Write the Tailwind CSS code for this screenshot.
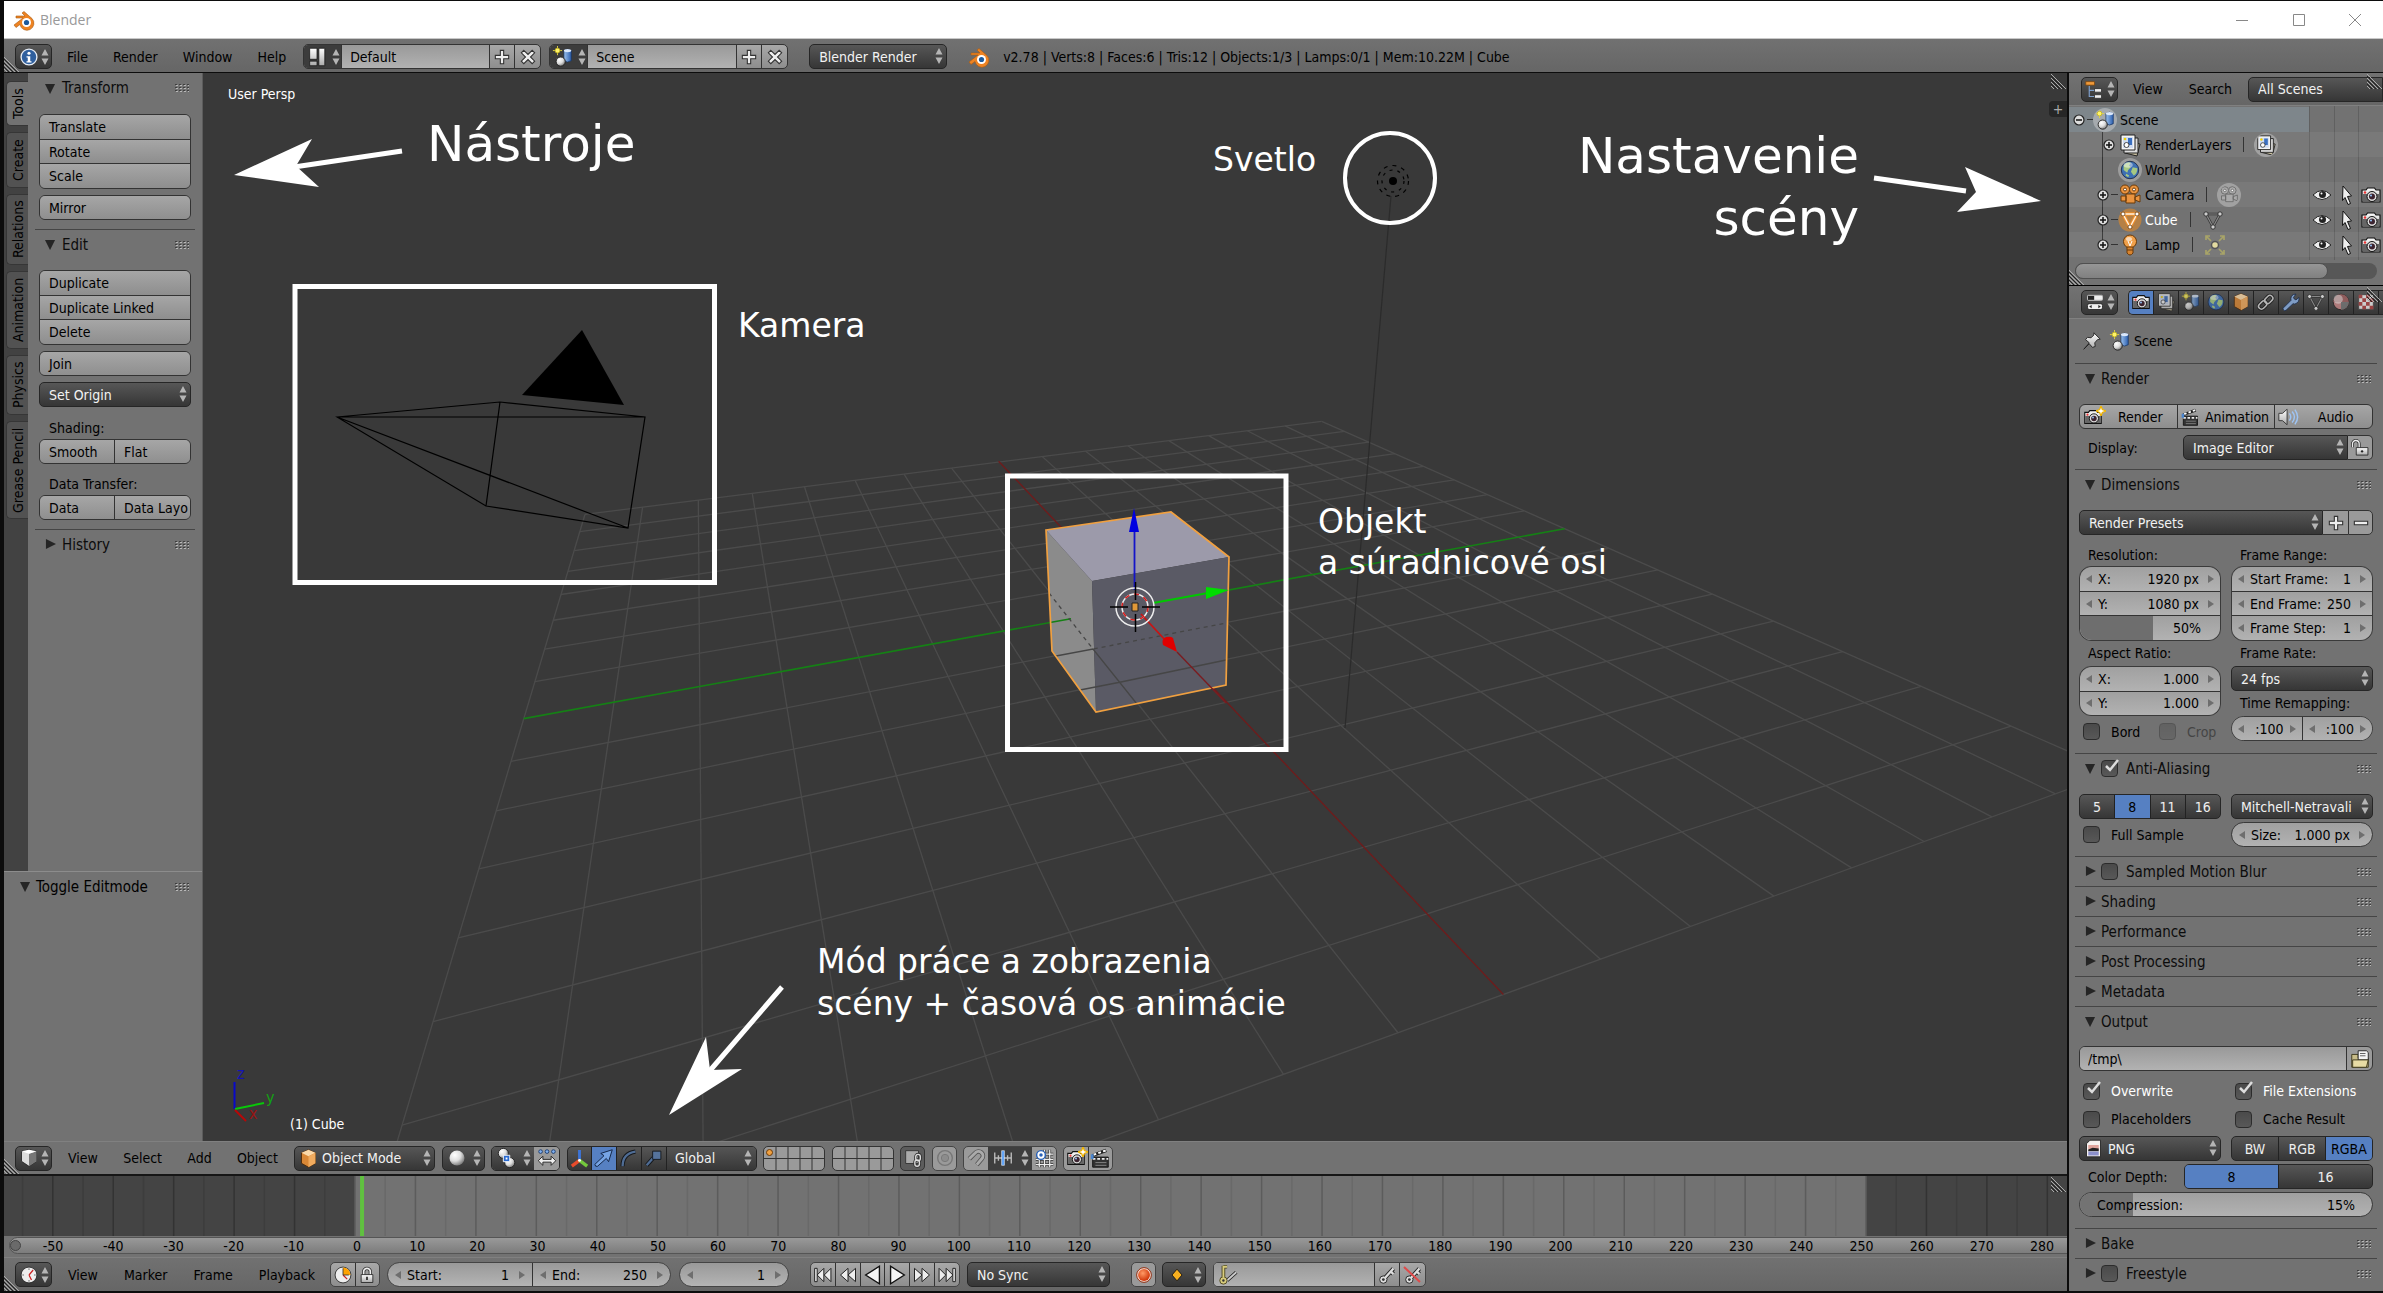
<!DOCTYPE html>
<html lang="en">
<head>
    <meta charset="UTF-8">
    <meta name="viewport" content="width=device-width, initial-scale=1.0">
    <title>Blender</title>
    <script src="https://cdn.jsdelivr.net/npm/@tailwindcss/browser@4"></script>
</head>
<body class="h-screen overflow-hidden bg-[#0c0c0c] flex flex-col pl-1 pt-px text-[14px] leading-[18px] text-black font-['DejaVu_Sans_Condensed','DejaVu_Sans',sans-serif] [&_svg]:shrink-0 [&_select]:appearance-none [&_select]:w-full [&_select]:h-[25px] [&_select]:rounded-[5px] [&_select]:border [&_select]:border-[#262626] [&_select]:bg-linear-to-b [&_select]:from-[#575757] [&_select]:to-[#363636] [&_select]:text-[#f2f2f2] [&_input]:min-w-0">

    <!-- Icons -->
    <svg class="absolute size-0" aria-hidden="true">
        <defs>
            <linearGradient id="gw" x1="0" y1="0" x2="0" y2="1"><stop offset="0" stop-color="#fff"/><stop offset="1" stop-color="#aaa"/></linearGradient>
            <linearGradient id="gb" x1="0" y1="0" x2="1" y2="0"><stop offset="0" stop-color="#9cc2ee"/><stop offset="1" stop-color="#2c5fae"/></linearGradient>
            <radialGradient id="gs" cx=".35" cy=".3" r=".8"><stop offset="0" stop-color="#fff"/><stop offset=".5" stop-color="#ddd"/><stop offset="1" stop-color="#666"/></radialGradient>
            <radialGradient id="gr" cx=".4" cy=".35" r=".7"><stop offset="0" stop-color="#ff9a66"/><stop offset="1" stop-color="#cc2c00"/></radialGradient>
        </defs>
        <symbol id="updown" viewBox="0 0 8 18"><path d="M4 1l3.5 6.500h-7zM4 17l3.500-6.500h-7z" fill="#b5b5b5"/></symbol>
        <symbol id="left" viewBox="0 0 6 8"><path d="M6 0v8L0 4z" fill="#6e6e6e"/></symbol>
        <symbol id="right" viewBox="0 0 6 8"><path d="M0 0v8l6-4z" fill="#6e6e6e"/></symbol>
        <symbol id="open" viewBox="0 0 12 12"><path d="M0 1h11L5.500 12z" fill="#252525"/></symbol>
        <symbol id="closed" viewBox="0 0 12 12"><path d="M1 0v11l11-5.500z" fill="#252525"/></symbol>
        <symbol id="grip" viewBox="0 0 14 8"><path d="M0 .5h14M0 3.500h14M0 6.500h14" stroke="#3f3f3f" stroke-dasharray="2 2"/><path d="M1 1.500h14M1 4.500h14M1 7.500h14" stroke="#b8b8b8" stroke-dasharray="2 2"/></symbol>
        <symbol id="corner" viewBox="0 0 16 16"><path d="M0 1l15 15M0 5l11 11M0 9l7 7M0 13l3 3" stroke="#aaa"/><path d="M0 3l13 13M0 7l9 9M0 11l5 5" stroke="#222"/></symbol>
        <symbol id="blender" viewBox="0 0 24 24"><path d="M2 17l9-7H4V8h9l-3-3 2-1.500 8 7a7 7 0 1 1-12 6l-4 3z" fill="#ee8322" stroke="#a85a10" stroke-width=".6"/><circle cx="14.500" cy="14.500" r="4.500" fill="#fff"/><circle cx="14.500" cy="14.500" r="2.600" fill="#1d5a9c"/></symbol>
        <symbol id="info" viewBox="0 0 24 24"><circle cx="12" cy="12" r="9.500" fill="#2f5f9e" stroke="#e8eef6" stroke-width="1.600"/><circle cx="12" cy="7.500" r="1.900" fill="#fff"/><path d="M9 11h4.500v6H15v1.500H9V17h1.500v-4.500H9z" fill="#fff"/></symbol>
        <symbol id="screen" viewBox="0 0 24 24"><path d="M4 2.500h8v12H4zM4 16.500h8v5H4zM14 2.500h6.500v19H14z" fill="url(#gw)" stroke="#111" stroke-width=".8"/></symbol>
        <symbol id="scene" viewBox="0 0 24 24"><path d="M13 5q3.500-3 8 0v11q-4 3-8 0z" fill="url(#gb)" stroke="#16335f" stroke-width=".8"/><ellipse cx="17" cy="5" rx="4" ry="1.700" fill="#dbe8fa"/><circle cx="6" cy="5" r="2.600" fill="#fff46a" stroke="#c8b820"/><path d="M6 0v2M6 8v2M1 5h2M9 5h2" stroke="#e8d840"/><circle cx="9.500" cy="17" r="5" fill="url(#gs)" stroke="#222"/></symbol>
        <symbol id="outliner" viewBox="0 0 24 24"><path d="M6 8v12h6M6 13h6" fill="none" stroke="#7fa0cc" stroke-width="1.300"/><path d="M2 3h10v4H2z" fill="#f09a3a" stroke="#7a430a" stroke-width=".8"/><path d="M12 11h8v4h-8zM12 18h8v4h-8z" fill="#eee" stroke="#222" stroke-width=".8"/></symbol>
        <symbol id="props" viewBox="0 0 24 24"><rect x="3" y="4" width="18" height="6" rx="1" fill="#222" stroke="#ddd"/><path d="M11 4.500h9.500v5H11z" fill="#eee"/><rect x="3" y="14" width="18" height="7" rx="2" fill="#eee" stroke="#222"/><path d="M8 15.500v4l-3-2zM16 15.500v4l3-2z" fill="#222"/></symbol>
        <symbol id="still" viewBox="0 0 24 24"><path d="M3 7h4l1.500-2h7L17 7h4v12H3z" fill="url(#gw)" stroke="#111" stroke-width="1.200"/><path d="M3.500 11h17v7.500h-17z" fill="#666"/><circle cx="13" cy="13.500" r="5" fill="#ddd" stroke="#111"/><circle cx="13" cy="13.500" r="3" fill="#3c2430"/><circle cx="12" cy="12.500" r="1" fill="#9cf"/><circle cx="6" cy="9.500" r="1.200" fill="#e33"/></symbol>
        <symbol id="spark" viewBox="0 0 10 10"><path d="M5 0l1.400 3.600L10 5 6.400 6.400 5 10 3.600 6.400 0 5l3.600-1.400z" fill="#fff" stroke="#f0b400" stroke-width="1.300"/></symbol>
        <symbol id="layers" viewBox="0 0 24 24"><path d="M9 8l13 3-3 12-12-3z" fill="#c9c0a0" stroke="#222"/><path d="M6 5h14v15H6z" fill="#ddd" stroke="#222"/><path d="M3 2h14v15H3z" fill="#f4f4f4" stroke="#222"/><path d="M5 4h10v11H5z" fill="#cfdcf2"/><path d="M10 5h4v7h-4z" fill="#3a6fc0"/><circle cx="8.500" cy="12" r="2.500" fill="#fff" stroke="#222" stroke-width=".8"/><circle cx="7" cy="6" r="1.300" fill="#f0d000"/></symbol>
        <symbol id="world" viewBox="0 0 24 24"><circle cx="12" cy="12" r="9.500" fill="#3e70b4" stroke="#1c2c4c"/><path d="M5 7q4-5 8-3l-2 3 2 2-3 3-1 3-4-3zM15 9l5 1q0 6-4 8l-3-4zM8 16l3 2-1 2-3-2z" fill="#a6c882"/><ellipse cx="10" cy="6.500" rx="5" ry="3" fill="#fff" opacity=".45"/></symbol>
        <symbol id="object" viewBox="0 0 24 24"><path d="M12 2l8 3.500v12L12 22l-8-4.500v-12z" fill="#d98836" stroke="#4a2808"/><path d="M12 2l8 3.500-8 4-8-4z" fill="#fbd9a8"/><path d="M12 9.500l8-4v12L12 22z" fill="#f0ab5e"/></symbol>
        <symbol id="chain" viewBox="0 0 24 24"><g fill="none" stroke="#222" stroke-width="4"><rect x="2" y="12" width="11" height="7" rx="3.500" transform="rotate(-45 8 15)"/><rect x="10" y="5" width="11" height="7" rx="3.500" transform="rotate(-45 16 9)"/></g><g fill="none" stroke="#b4b4b4" stroke-width="1.800"><rect x="2" y="12" width="11" height="7" rx="3.500" transform="rotate(-45 8 15)"/><rect x="10" y="5" width="11" height="7" rx="3.500" transform="rotate(-45 16 9)"/></g></symbol>
        <symbol id="wrench" viewBox="0 0 24 24"><path d="M3 19l9-9q-1-5 3-7l3-.500-3 4 1 2 2 1 3.500-3q1 6-5 8l-2-.500-8.500 8q-2 1-3-.500t-.500-2.500z" fill="#7f9cc4" stroke="#1c2c4c"/></symbol>
        <symbol id="mesh" viewBox="0 0 24 24"><path d="M5 6h14l-7 13z" fill="none" stroke="#333" stroke-width="2.600"/><path d="M5 6h14l-7 13z" fill="none" stroke="#888" stroke-width="1.200"/><circle cx="5" cy="6" r="2.200" fill="#ccc" stroke="#333"/><circle cx="19" cy="6" r="2.200" fill="#ccc" stroke="#333"/><circle cx="12" cy="19" r="2.200" fill="#ccc" stroke="#333"/></symbol>
        <symbol id="cubemesh" viewBox="0 0 24 24"><circle cx="12" cy="12" r="11.500" fill="#b58045"/><path d="M5 6h14l-7 13z" fill="none" stroke="#f0902c" stroke-width="3.600"/><path d="M5 6h14l-7 13z" fill="none" stroke="#fff0dc" stroke-width="1.400"/><g fill="#fff" stroke="#6a3a08" stroke-width=".8"><circle cx="5" cy="6" r="2"/><circle cx="19" cy="6" r="2"/><circle cx="12" cy="19" r="2"/></g></symbol>
        <symbol id="material" viewBox="0 0 24 24"><circle cx="12" cy="12" r="8.500" fill="#c98888" stroke="#222"/><path d="M12 3.500a8.500 8.500 0 0 1 0 17V12H3.500A8.500 8.500 0 0 1 12 3.500z" fill="#a06060"/><circle cx="9" cy="9" r="5" fill="#fff" opacity=".5"/><path d="M12 12h8.500A8.500 8.500 0 0 1 12 20.500z" fill="#777"/></symbol>
        <symbol id="texture" viewBox="0 0 24 24"><path d="M4 4h16v16H4z" fill="#eee" stroke="#444"/><path d="M4 4h4v4H4zM12 4h4v4h-4zM8 8h4v4H8zM16 8h4v4h-4zM4 12h4v4H4zM12 12h4v4h-4zM8 16h4v4H8zM16 16h4v4h-4z" fill="#b04444"/></symbol>
        <symbol id="moviecam" viewBox="0 0 24 24"><circle cx="7" cy="6.500" r="4.500"/><circle cx="16" cy="6.500" r="4.500"/><path d="M8 11h9v9H8zM17 14l5-2v7l-5-2zM3 13h5v5H3z"/><circle cx="7" cy="6.500" r="1.500" fill="#fff"/><circle cx="16" cy="6.500" r="1.500" fill="#fff"/></symbol>
        <symbol id="lamp" viewBox="0 0 24 24"><circle cx="12" cy="8.500" r="6.500" fill="#f0a04a" stroke="#6a3a08"/><path d="M9 14h6v6q-3 4-6 0z" fill="#d88430" stroke="#6a3a08"/><path d="M10 8l2 5 2-5" fill="none" stroke="#fff"/><path d="M9 17h6" stroke="#6a3a08"/><ellipse cx="11" cy="6" rx="3" ry="2" fill="#fff" opacity=".6"/></symbol>
        <symbol id="lampdata" viewBox="0 0 24 24"><circle cx="12" cy="12" r="3.500" fill="#e4dca0" stroke="#555" stroke-width="1.500"/><path d="M3 7V3h4M3 3l5 5M21 7V3h-4M21 3l-5 5M3 17v4h4M3 21l5-5M21 17v4h-4M21 21l-5-5" fill="none" stroke="#a8a468" stroke-width="1.700"/></symbol>
        <symbol id="eye" viewBox="0 0 24 24"><path d="M3 12q9-9 18 0-9 9-18 0z" fill="#eee" stroke="#222"/><circle cx="12.500" cy="11.500" r="3.500" fill="#222"/><circle cx="11.500" cy="10.500" r="1" fill="#fff"/></symbol>
        <symbol id="cursor" viewBox="0 0 24 24"><path d="M8 3l8.500 10-4 .500 3 7-2.500 1-3-7-2.500 3z" fill="#eee" stroke="#111"/></symbol>
        <symbol id="pin" viewBox="0 0 24 24"><path d="M14 3l7 7-3 .500-3 3.500.500 4-3 1-3.500-4L3 21l6-7-4-3.500 2-2.500 4 .500 3-3z" fill="url(#gw)" stroke="#222"/></symbol>
        <symbol id="clapper" viewBox="0 0 24 24"><path d="M4 11h17v11H4z" fill="#333" stroke="#111"/><path d="M4 13h17" stroke="#eee" stroke-width="2" stroke-dasharray="3 2"/><path d="M7 17h12M7 20h12" stroke="#888"/><path d="M3 8l15-6 1.500 3.500L5 10.500z" fill="#222"/><path d="M5 8.500l14-5" stroke="#fff" stroke-width="2.200" stroke-dasharray="3 2.500"/><path d="M2 8h3v5H2z" fill="#4a86d0"/></symbol>
        <symbol id="speaker" viewBox="0 0 24 24"><path d="M2 8h4l5-4.500v17L6 16H2z" fill="url(#gw)" stroke="#333"/><path d="M13.500 8q3 4 0 8M16.500 6q5 6 0 12M19.500 4q6 8 0 16" fill="none" stroke="#9ec4f4" stroke-width="1.600"/></symbol>
        <symbol id="unlock" viewBox="0 0 24 24"><path d="M3 11V7a4 4 0 0 1 8 0v5" fill="none" stroke="#333" stroke-width="3.600"/><path d="M3 11V7a4 4 0 0 1 8 0v5" fill="none" stroke="#eee" stroke-width="1.600"/><path d="M7.500 11.500h14v9h-14z" fill="url(#gw)" stroke="#222"/><circle cx="14.500" cy="16" r="1.400" fill="#222"/></symbol>
        <symbol id="lock" viewBox="0 0 24 24"><path d="M8 12V8a4 4 0 0 1 8 0v4" fill="none" stroke="#333" stroke-width="4"/><path d="M8 12V8a4 4 0 0 1 8 0v4" fill="none" stroke="#eee" stroke-width="2"/><path d="M5 11.500h14v9.500H5z" fill="url(#gw)" stroke="#222"/><path d="M12 14v4" stroke="#222" stroke-width="2"/></symbol>
        <symbol id="folder" viewBox="0 0 24 24"><path d="M3 7h7v4h11v10H3z" fill="#c8bc88" stroke="#3a3418"/><path d="M10 3h9l2 2v8H10z" fill="#f4f4f4" stroke="#222"/><path d="M12 6h6M12 8.500h6" stroke="#555"/><path d="M4 13h17l-2 8H4z" fill="#e8dca4" stroke="#3a3418"/></symbol>
        <symbol id="image" viewBox="0 0 24 24"><path d="M8 2.500h12v19H4v-15z" fill="#f6f2f0" stroke="#222"/><path d="M6 8h12v5H6z" fill="#e0a49c"/><path d="M6 13l5-2 7 1v3H6z" fill="#222"/><path d="M6 15.500h12V20H6z" fill="#8c90cc"/></symbol>
        <symbol id="viewcube" viewBox="0 0 24 24"><path d="M12 2l9 2v12l-9 6-9-6V4z" fill="#ddd" stroke="#222"/><path d="M12 7l9-3v12l-9 6z" fill="#777"/><path d="M12 2l9 2-9 3-9-3z" fill="#fff"/></symbol>
        <symbol id="sphere" viewBox="0 0 24 24"><circle cx="12" cy="12" r="9" fill="url(#gs)"/></symbol>
        <symbol id="pivot" viewBox="0 0 24 24"><circle cx="8" cy="7" r="5.500" fill="url(#gs)" stroke="#222"/><circle cx="15" cy="17" r="5.500" fill="url(#gs)" stroke="#222"/><path d="M8 9h7v7H8z" fill="#2a6ad0" stroke="#fff"/><path d="M10.500 11.500h2v2h-2z" fill="#fff"/></symbol>
        <symbol id="centers" viewBox="0 0 24 24"><g fill="#7fb0f0" stroke="#1c3c70"><circle cx="5" cy="5" r="2"/><circle cx="12" cy="5" r="2"/><circle cx="19" cy="5" r="2"/></g><path d="M7.500 10L2.500 15l5 5v-3.500h9V20l5-5-5-5v3.500h-9z" fill="#eee" stroke="#222"/></symbol>
        <symbol id="axes" viewBox="0 0 24 24"><path d="M12 14V3" stroke="#3c74d8" stroke-width="3"/><path d="M12 14l-8 6" stroke="#e84c2c" stroke-width="3.500"/><path d="M12 14l8 6" stroke="#74c83c" stroke-width="3.500"/><circle cx="12" cy="14" r="1.500" fill="#fff"/></symbol>
        <symbol id="arrow" viewBox="0 0 24 24"><path d="M3 21l-1-2L12 9.500 8.500 7 21 3l-4 13-2.500-3.500L5 21z" fill="#76a4e4" stroke="#0e2040"/></symbol>
        <symbol id="arc" viewBox="0 0 24 24"><path d="M5 21Q5 7 19 5" fill="none" stroke="#15181c" stroke-width="4.500"/><path d="M5 21Q5 7 19 5" fill="none" stroke="#4f6c94" stroke-width="2.500"/></symbol>
        <symbol id="scale" viewBox="0 0 24 24"><path d="M4 20l8-9" stroke="#15181c" stroke-width="4.500"/><path d="M4 20l8-9" stroke="#4f6c94" stroke-width="2.500"/><path d="M10.500 4.500h9v9h-9z" fill="#55739c" stroke="#15181c"/></symbol>
        <symbol id="layerlock" viewBox="0 0 24 24"><path d="M4 4h14v14H4z" fill="#aaa" stroke="#333"/><g fill="none" stroke="#333" stroke-width="3.400"><rect x="15" y="8" width="5" height="7" rx="2.500"/><rect x="14" y="14" width="5" height="7" rx="2.500"/></g><g fill="none" stroke="#ddd" stroke-width="1.500"><rect x="15" y="8" width="5" height="7" rx="2.500"/><rect x="14" y="14" width="5" height="7" rx="2.500"/></g></symbol>
        <symbol id="prop" viewBox="0 0 24 24"><circle cx="12" cy="12" r="8" fill="none" stroke="#777" stroke-width="1.500"/><circle cx="12" cy="12" r="4" fill="#8c8c8c" stroke="#777"/></symbol>
        <symbol id="magnet" viewBox="0 0 24 24"><path d="M4 13l7-7a5 5 0 0 1 8 7l-6 7" fill="none" stroke="#555" stroke-width="5.500"/><path d="M4 13l7-7a5 5 0 0 1 8 7l-6 7" fill="none" stroke="#aaa" stroke-width="3.500"/></symbol>
        <symbol id="increment" viewBox="0 0 24 24"><path d="M3 6v12M7 9v6M17 9v6M21 6v12M3 12h18" stroke="#bbb" stroke-width="1.500"/><path d="M10.500 4h3v16h-3z" fill="#5aa0f8" stroke="#fff" stroke-width=".6"/></symbol>
        <symbol id="target" viewBox="0 0 24 24"><path d="M2 13h20M2 19h20M12 2v20M18 2v20M6 10v12M10 7h12" stroke="#333" stroke-width="3"/><path d="M2 13h20M2 19h20M12 2v20M18 2v20M6 10v12M10 7h12" stroke="#eee" stroke-width="1.500"/><circle cx="8" cy="8" r="5" fill="#fff" stroke="#2a62b8" stroke-width="1.700"/><circle cx="8" cy="8" r="2" fill="#2a62b8"/></symbol>
        <symbol id="clock" viewBox="0 0 24 24"><circle cx="12" cy="12" r="9.500" fill="#eee" stroke="#222"/><path d="M12 12l5-6M12 12l3 6" stroke="#c22" stroke-width="1.500"/><path d="M12 4v2M12 18v2M4 12h2M18 12h2" stroke="#555"/></symbol>
        <symbol id="preview" viewBox="0 0 24 24"><circle cx="12" cy="12" r="9.500" fill="#eee" stroke="#222"/><path d="M12 12V3a9 9 0 0 1 9 9z" fill="#ffa200"/><path d="M12 12l5 5" stroke="#c22" stroke-width="1.500"/><path d="M12 4v8h7" fill="none" stroke="#333"/></symbol>
        <symbol id="rec" viewBox="0 0 24 24"><circle cx="12" cy="12" r="8" fill="#f6e4dc" stroke="#8c2000"/><circle cx="12" cy="12" r="6.500" fill="url(#gr)"/></symbol>
        <symbol id="keyframe" viewBox="0 0 24 24"><path d="M12 5l6 7-6 7-6-7z" fill="#f8b020" stroke="#111"/></symbol>
        <symbol id="key" viewBox="0 0 24 24"><path d="M9 16L19 5M16 8l3 3" stroke="#222" stroke-width="4.500"/><circle cx="8" cy="17" r="4" fill="#ddd" stroke="#222"/><path d="M9 16L19 5M16 8l3 3" stroke="#ddd" stroke-width="2.500"/><circle cx="8" cy="17" r="1.500" fill="#333"/></symbol>
        <symbol id="keys" viewBox="0 0 24 24"><path d="M11 18l10-9" stroke="#222" stroke-width="4"/><path d="M11 18l10-9" stroke="#ccc" stroke-width="2"/><path d="M7 2v13M7 3h4" stroke="#4a4420" stroke-width="4"/><circle cx="7" cy="18" r="4" fill="#d8cc7c" stroke="#4a4420"/><path d="M7 2v13M7 3h4" stroke="#d8cc7c" stroke-width="2"/><circle cx="7" cy="18" r="1.300" fill="#333"/></symbol>
        <symbol id="plus" viewBox="0 0 24 24"><path d="M10 4h4v6h6v4h-6v6h-4v-6H4v-4h6z" fill="#eee" stroke="#333" stroke-width="1.300"/></symbol>
        <symbol id="minus" viewBox="0 0 24 24"><path d="M4 10h16v4H4z" fill="#eee" stroke="#333" stroke-width="1.300"/></symbol>
        <symbol id="cross" viewBox="0 0 24 24"><path d="M7 4l5 5 5-5 3 3-5 5 5 5-3 3-5-5-5 5-3-3 5-5-5-5z" fill="#eee" stroke="#333" stroke-width="1.300"/></symbol>
        <symbol id="expand" viewBox="0 0 16 16"><circle cx="8" cy="8" r="5" fill="#ddd" stroke="#222" stroke-width="1.200"/><path d="M5 8h6M8 5v6" stroke="#111" stroke-width="1.500"/></symbol>
        <symbol id="collapse" viewBox="0 0 16 16"><circle cx="8" cy="8" r="5" fill="#ddd" stroke="#222" stroke-width="1.200"/><path d="M5 8h6" stroke="#111" stroke-width="1.500"/></symbol>
        <symbol id="tostart" viewBox="0 0 24 24"><path d="M2 4h3v16H2zM13 4v16l-8-8zM21.500 4v16l-8-8z" fill="#eee" stroke="#222" stroke-width="1.200"/></symbol>
        <symbol id="rewind" viewBox="0 0 24 24"><path d="M12 4v16l-9-8zM21 4v16l-9-8z" fill="#eee" stroke="#222" stroke-width="1.200"/></symbol>
        <symbol id="play" viewBox="0 0 24 24"><path d="M5 2.500v19L20 12z" fill="#f4f4f4" stroke="#111" stroke-width="1.500"/></symbol>
    </svg>

    <!-- Title bar -->
    <header class="h-[38px] shrink-0 bg-white border-b border-[#c8c8c8] flex items-center pl-2 pr-4 text-[#999] font-['Open_Sans',sans-serif]">
        <svg class="size-6"><use href="#blender"/></svg>
        <h1 class="ml-1 flex-1">Blender</h1>
        <button aria-label="Minimize" class="w-[57px] h-8 grid place-items-center"><svg class="size-3" viewBox="0 0 12 12"><path d="M0 6.500h12" stroke="#888"/></svg></button>
        <button aria-label="Maximize" class="w-[57px] h-8 grid place-items-center"><svg class="size-3" viewBox="0 0 12 12"><path d="M.5.5h11v11H.5z" fill="none" stroke="#888"/></svg></button>
        <button aria-label="Close" class="w-6 h-8 ml-4 grid place-items-center"><svg class="size-3" viewBox="0 0 12 12"><path d="M0 0l12 12M12 0L0 12" stroke="#888"/></svg></button>
    </header>

    <!-- Info header -->
    <nav class="relative h-[33px] pt-[2px] bg-linear-to-b from-[#717171] to-[#666] flex items-center pl-[11px] shrink-0">
        <svg class="absolute left-0 bottom-0 size-4"><use href="#corner"/></svg>
        <button aria-label="Editor type" class="h-[25px] w-[37px] rounded-[5px] border border-[#262626] bg-linear-to-b from-[#575757] to-[#363636] flex items-center justify-center gap-[2px]"><svg class="size-5"><use href="#info"/></svg><svg class="w-2 h-[18px]"><use href="#updown"/></svg></button>
        <button class="ml-[15px]">File</button>
        <button class="ml-[25px]">Render</button>
        <button class="ml-[25px]">Window</button>
        <button class="ml-[25px]">Help</button>
        <div class="ml-[17px] h-[25px] w-[238px] rounded-[5px] border border-[#333] overflow-hidden flex divide-x divide-[#333] bg-linear-to-b from-[#a8a8a8] to-[#8e8e8e]">
            <button aria-label="Browse screens" class="w-[38px] bg-[#3c3c3c] flex items-center justify-center gap-1"><svg class="size-[22px]"><use href="#screen"/></svg><svg class="w-2 h-[18px]"><use href="#updown"/></svg></button>
            <input aria-label="Screen" value="Default" class="flex-1 px-2 bg-linear-to-b from-[#999] to-[#b2b2b2]">
            <button aria-label="Add screen" class="w-[25px] grid place-items-center"><svg class="size-5"><use href="#plus"/></svg></button>
            <button aria-label="Delete screen" class="w-[25px] grid place-items-center"><svg class="size-5"><use href="#cross"/></svg></button>
        </div>
        <div class="ml-2 h-[25px] w-[239px] rounded-[5px] border border-[#333] overflow-hidden flex divide-x divide-[#333] bg-linear-to-b from-[#a8a8a8] to-[#8e8e8e]">
            <button aria-label="Browse scenes" class="w-[38px] bg-[#3c3c3c] flex items-center justify-center gap-1"><svg class="size-[22px]"><use href="#scene"/></svg><svg class="w-2 h-[18px]"><use href="#updown"/></svg></button>
            <input aria-label="Scene" value="Scene" class="flex-1 px-2 bg-linear-to-b from-[#999] to-[#b2b2b2]">
            <button aria-label="Add scene" class="w-[25px] grid place-items-center"><svg class="size-5"><use href="#plus"/></svg></button>
            <button aria-label="Delete scene" class="w-[25px] grid place-items-center"><svg class="size-5"><use href="#cross"/></svg></button>
        </div>
        <label class="relative ml-[21px] w-[138px]"><select aria-label="Render engine" class="pl-[9px]"><option>Blender Render</option></select><svg class="absolute right-1 top-[3px] w-2 h-[18px]"><use href="#updown"/></svg></label>
        <svg class="ml-5 size-6"><use href="#blender"/></svg>
        <p class="ml-3 whitespace-nowrap">v2.78 | Verts:8 | Faces:6 | Tris:12 | Objects:1/3 | Lamps:0/1 | Mem:10.22M | Cube</p>
    </nav>

    <main class="flex-1 min-h-0 flex gap-[2px] pt-px pb-[2px]">
        <div class="flex-1 min-w-0 flex flex-col">
            <div class="flex-1 min-h-0 flex">
                <!-- Tool shelf -->
                <aside class="w-[199px] shrink-0 bg-[#727272] flex flex-col border-r border-[#5c5c5c]">
                    <div class="flex h-[798px] shrink-0">
                        <div class="w-6 shrink-0 bg-[#424242] pl-[2px] pt-2 flex flex-col gap-[6px] [&_button]:[writing-mode:vertical-rl] [&_button]:rotate-180 [&_button]:rounded-r-[5px] [&_button]:bg-[#525252] [&_button]:border [&_button]:border-l-0 [&_button]:border-[#363636] [&_button]:leading-[20px] [&_button]:whitespace-nowrap">
                            <button class="h-[45px] bg-[#727272]!">Tools</button>
                            <button class="h-[56px]">Create</button>
                            <button class="h-[71px]">Relations</button>
                            <button class="h-[78px]">Animation</button>
                            <button class="h-[60px]">Physics</button>
                            <button class="h-[98px]">Grease Pencil</button>
                        </div>
                        <div class="flex-1 min-w-0 px-[7px] [&_h2]:flex [&_h2]:items-center [&_h2]:h-[30px] [&_h2]:text-[15px] [&_h2]:pl-[10px] [&_h2]:pr-[6px] [&_h2]:gap-[6px] [&_h2]:text-[#0c0c0c] [&_button]:text-left [&_button]:h-6 [&_button]:px-[9px] [&_button]:flex-1 [&_button]:bg-linear-to-b [&_button]:from-[#a6a6a6] [&_button]:to-[#8e8e8e] [&_button]:whitespace-nowrap [&_button]:overflow-hidden">
                            <h2><svg class="size-[11px]"><use href="#open"/></svg><span class="flex-1">Transform</span><svg class="w-[14px] h-2"><use href="#grip"/></svg></h2>
                            <div class="mt-[11px] mx-1 h-[75px] flex flex-col rounded-[6px] border border-[#333] divide-y divide-[#333] overflow-hidden">
                                <button>Translate</button>
                                <button>Rotate</button>
                                <button>Scale</button>
                            </div>
                            <div class="mt-[6px] mx-1 h-[25px] flex rounded-[6px] border border-[#333] overflow-hidden"><button>Mirror</button></div>
                            <h2 class="mt-[9px] border-t border-[#454545]"><svg class="size-[11px]"><use href="#open"/></svg><span class="flex-1">Edit</span><svg class="w-[14px] h-2"><use href="#grip"/></svg></h2>
                            <div class="mt-[11px] mx-1 h-[75px] flex flex-col rounded-[6px] border border-[#333] divide-y divide-[#333] overflow-hidden">
                                <button>Duplicate</button>
                                <button>Duplicate Linked</button>
                                <button>Delete</button>
                            </div>
                            <div class="mt-[6px] mx-1 h-[25px] flex rounded-[6px] border border-[#333] overflow-hidden"><button>Join</button></div>
                            <label class="relative block mt-[6px] mx-1"><select aria-label="Set Origin" class="pl-[9px]"><option>Set Origin</option></select><svg class="absolute right-1 top-[3px] w-2 h-[18px]"><use href="#updown"/></svg></label>
                            <p class="mt-3 pl-[14px] h-5">Shading:</p>
                            <div class="mx-1 h-[25px] flex rounded-[6px] border border-[#333] divide-x divide-[#333] overflow-hidden"><button class="w-[75px] flex-none!">Smooth</button><button>Flat</button></div>
                            <p class="mt-[11px] pl-[14px] h-5">Data Transfer:</p>
                            <div class="mx-1 h-[25px] flex rounded-[6px] border border-[#333] divide-x divide-[#333] overflow-hidden"><button class="w-[75px] flex-none!">Data</button><button class="pr-0!">Data Layo</button></div>
                            <h2 class="mt-[9px] border-t border-[#454545]"><svg class="size-[11px]"><use href="#closed"/></svg><span class="flex-1">History</span><svg class="w-[14px] h-2"><use href="#grip"/></svg></h2>
                        </div>
                    </div>
                    <h2 class="border-t border-[#8c8c8c] flex items-center gap-[5px] h-[30px] pl-4 pr-[13px] text-[15px]"><svg class="size-[11px]"><use href="#open"/></svg><span class="flex-1">Toggle Editmode</span><svg class="w-[14px] h-2"><use href="#grip"/></svg></h2>
                </aside>

                <!-- 3D view -->
                <section class="relative flex-1 min-w-0 bg-[#393939]" aria-label="3D View">
                    <svg class="absolute inset-0 w-full h-full" viewBox="203 73 1864 1068" preserveAspectRatio="xMidYMid slice">
                        <g id="floor" stroke="#4b4b4b" stroke-width="1.300"></g>
                        <path d="M523.700 718.600L1564.500 528.700" stroke="#158015" stroke-width="1.600"/>
                        <path d="M998.600 461.200L1503.400 994.500" stroke="#6e1c1c" stroke-width="1.400"/>
                        <path d="M1391 196L1345 728" stroke="#2b2b2b" stroke-width="1.200"/>

                        <!-- cube -->
                        <path d="M1046 530L1092 581 1096 712 1052 651z" fill="#8b8b8b"/>
                        <path d="M1046 530L1171 512 1229 557 1092 581z" fill="#9c9aaa"/>
                        <path d="M1092 581L1229 557 1226 685 1096 712z" fill="#5a5a65"/>
                        <path d="M1050 622.500L1071 618.700" stroke="#158015" stroke-width="1.600"/>
                        <g fill="none" stroke="#464646" stroke-width="1.300">
                            <path d="M1049 593L1093 649 1226 623" stroke-dasharray="4 4"/>
                            <path d="M1056 656L1093 649 1137 704M1080 690L1121 682 1226 660"/>
                        </g>
                        <path d="M1046 530L1171 512 1229 557 1226 685 1096 712 1052 651z" fill="none" stroke="#f0a040" stroke-width="1.700"/>
                        <path d="M1177 652L1226 703" stroke="#7a1c20" stroke-width="1.400"/>

                        <!-- manipulator -->
                        <path d="M1134.500 590V530" stroke="#1414c8" stroke-width="1.800"/><path d="M1134 508l5 24h-10z" fill="#0000e0"/>
                        <path d="M1153 603L1208 593" stroke="#00c800" stroke-width="1.800"/><path d="M1229 590l-23-3v12z" fill="#00dc00"/>
                        <path d="M1141 614L1166 641" stroke="#c81414" stroke-width="1.800"/><path d="M1177 652l-14-7q-2-6 3-8 5-1 7 1z" fill="#e00000"/>
                        <circle cx="1135" cy="607" r="19" fill="none" stroke="#eee" stroke-width="1.500"/>
                        <circle cx="1135" cy="607" r="13" fill="none" stroke="#eee" stroke-width="1.500"/>
                        <circle cx="1135" cy="607" r="13" fill="none" stroke="#d81c1c" stroke-width="1.500" stroke-dasharray="5 5"/>
                        <path d="M1110 607h18M1142 607h18M1135.500 582v18M1135.500 614v18" stroke="#000" stroke-width="1.500"/>
                        <path d="M1132 603h6v8h-6z" fill="#e09838" stroke="#222"/>

                        <!-- camera -->
                        <path d="M337 417L500 402 645 417 628 528 486 506zM337 417H645M337 417L628 528M500 402L486 506" fill="none" stroke="#000" stroke-width="1.200"/>
                        <path d="M582 330L522 395 624 405z"/>

                        <!-- lamp -->
                        <circle cx="1393" cy="181" r="4"/>
                        <circle cx="1393" cy="181" r="11" fill="none" stroke="#000" stroke-width="1.200" stroke-dasharray="3 5"/>
                        <circle cx="1393" cy="181" r="15.500" fill="none" stroke="#000" stroke-width="1.200" stroke-dasharray="4 5"/>

                        <!-- axis widget -->
                        <g stroke-width="2">
                            <path d="M234.500 1109V1082" stroke="#0808c8"/><path d="M235 1109l29-6" stroke="#08c808"/><path d="M235 1110l11 11" stroke="#b80808"/>
                        </g>
                        <g font-size="16"><text x="237" y="1079" fill="#1414b4">z</text><text x="266" y="1103" fill="#14a014">y</text><text x="249" y="1119" fill="#981414">x</text></g>
                        <g fill="#fff"><text x="228" y="99">User Persp</text><text x="290" y="1129">(1) Cube</text></g>

                        <!-- notes -->
                        <g fill="none" stroke="#fff" stroke-width="5">
                            <path d="M295 286.500H714.500V582.500H295zM1007.500 476H1286V749.500H1007.500z"/>
                            <circle cx="1390" cy="178" r="45" stroke-width="4"/>
                            <path d="M402 151L294 167M1874 178L1966 191M782 987L707 1074"/>
                        </g>
                        <path fill="#fff" d="M234 175L312 139 296 166 319 187zM2041 201L1965 167 1976 192 1957 212zM669 1115L706 1037 710 1070 742 1069z"/>
                        <g fill="#fff" font-family="DejaVu Sans, sans-serif">
                            <g font-size="50"><text x="427" y="161">Nástroje</text><text x="1859" y="173" text-anchor="end">Nastavenie</text><text x="1859" y="235" text-anchor="end">scény</text></g>
                            <g font-size="33"><text x="1213" y="171">Svetlo</text><text x="738" y="337">Kamera</text><text x="1318" y="533">Objekt</text><text x="1318" y="574">a súradnicové osi</text><text x="817" y="973">Mód práce a zobrazenia</text><text x="817" y="1015">scény + časová os animácie</text></g>
                        </g>
                    </svg>
                    <svg class="absolute right-0 top-0 size-4"><use href="#corner"/></svg>
                    <button aria-label="Show properties" class="absolute right-0 top-[28px] w-[18px] h-4 rounded-l bg-[#262626] text-[#aaa] leading-4">+</button>
                </section>
            </div>

            <!-- 3D view header -->
            <nav class="relative h-[33px] shrink-0 bg-[#727272] border-t border-[#808080] flex items-center pl-[11px]">
                <svg class="absolute left-0 bottom-0 size-4"><use href="#corner"/></svg>
                <button aria-label="Editor type" class="h-[25px] w-[37px] rounded-[5px] border border-[#262626] bg-linear-to-b from-[#575757] to-[#363636] flex items-center justify-center gap-[2px]"><svg class="size-5"><use href="#viewcube"/></svg><svg class="w-2 h-[18px]"><use href="#updown"/></svg></button>
                <div class="ml-4 w-[210px] flex justify-between"><button>View</button><button>Select</button><button>Add</button><button>Object</button></div>
                <label class="relative ml-4 w-[141px]"><select aria-label="Mode" class="pl-[27px]"><option>Object Mode</option></select><svg class="absolute left-1 top-[2px] size-[21px]"><use href="#object"/></svg><svg class="absolute right-1 top-[3px] w-2 h-[18px]"><use href="#updown"/></svg></label>
                <button aria-label="Viewport shading" class="ml-[7px] h-[25px] w-[43px] rounded-[5px] border border-[#262626] bg-linear-to-b from-[#575757] to-[#363636] flex items-center justify-center gap-[6px]"><svg class="size-5"><use href="#sphere"/></svg><svg class="w-2 h-[18px]"><use href="#updown"/></svg></button>
                <div class="ml-[6px] h-[25px] w-[69px] flex rounded-[5px] border border-[#262626] overflow-hidden">
                    <button aria-label="Pivot point" class="flex-1 bg-linear-to-b from-[#575757] to-[#363636] flex items-center justify-center gap-[5px]"><svg class="size-[22px]"><use href="#pivot"/></svg><svg class="w-2 h-[18px]"><use href="#updown"/></svg></button>
                    <button aria-label="Manipulate center points" class="w-[25px] bg-[#999] grid place-items-center"><svg class="size-[22px]"><use href="#centers"/></svg></button>
                </div>
                <div class="ml-[7px] flex h-[25px] w-[190px] rounded-[5px] border border-[#262626] overflow-hidden bg-linear-to-b from-[#575757] to-[#363636] divide-x divide-[#222]">
                    <button aria-label="Manipulator" class="w-6 grid place-items-center"><svg class="size-[23px]"><use href="#axes"/></svg></button>
                    <button aria-label="Translate manipulator" class="w-[25px] bg-[#5680c2] grid place-items-center"><svg class="size-[22px]"><use href="#arrow"/></svg></button>
                    <button aria-label="Rotate manipulator" class="w-[25px] grid place-items-center"><svg class="size-[22px]"><use href="#arc"/></svg></button>
                    <button aria-label="Scale manipulator" class="w-[25px] grid place-items-center"><svg class="size-[22px]"><use href="#scale"/></svg></button>
                    <label class="relative flex-1"><select aria-label="Orientation" class="pl-2 -mt-px border-0! rounded-none!"><option>Global</option></select><svg class="absolute right-1 top-[2px] w-2 h-[18px]"><use href="#updown"/></svg></label>
                </div>
                <button aria-label="Layers 1-10" class="ml-[6px] w-[62px] h-[25px] rounded-[5px] border border-[#333] bg-[#9a9a9a] overflow-hidden"><svg class="w-full h-full" viewBox="0 0 60 23"><path d="M12 0v23M24 0v23M36 0v23M48 0v23M0 11.500h60" stroke="#333"/><circle cx="5.500" cy="5.500" r="3" fill="#f0a040" stroke="#6a3a08"/></svg></button>
                <button aria-label="Layers 11-20" class="ml-[7px] w-[62px] h-[25px] rounded-[5px] border border-[#333] bg-[#9a9a9a] overflow-hidden"><svg class="w-full h-full" viewBox="0 0 60 23"><path d="M12 0v23M24 0v23M36 0v23M48 0v23M0 11.500h60" stroke="#333"/></svg></button>
                <button aria-label="Lock to scene" class="ml-[6px] size-[25px] rounded-[5px] border border-[#333] bg-[#5c5c5c] grid place-items-center"><svg class="size-[22px]"><use href="#layerlock"/></svg></button>
                <button aria-label="Proportional editing" class="ml-[7px] size-[25px] rounded-[5px] border border-[#444] bg-[#9a9a9a] grid place-items-center"><svg class="size-[22px]"><use href="#prop"/></svg></button>
                <div class="ml-[6px] h-[25px] w-[94px] flex rounded-[5px] border border-[#444] overflow-hidden bg-[#9a9a9a]">
                    <button aria-label="Snap" class="w-6 grid place-items-center"><svg class="size-5"><use href="#magnet"/></svg></button>
                    <button aria-label="Snap element" class="flex-1 bg-[#3e3e3e] flex items-center justify-center gap-[7px]"><svg class="size-[22px]"><use href="#increment"/></svg><svg class="w-2 h-[18px]"><use href="#updown"/></svg></button>
                    <button aria-label="Snap target" class="w-6 grid place-items-center"><svg class="size-[21px]"><use href="#target"/></svg></button>
                </div>
                <div class="ml-[6px] h-[25px] w-[50px] flex rounded-[5px] border border-[#444] divide-x divide-[#333] overflow-hidden bg-[#9a9a9a]">
                    <button aria-label="Render view" class="relative flex-1 grid place-items-center"><svg class="size-[22px]"><use href="#still"/></svg><svg class="absolute right-0 top-0 size-[10px]"><use href="#spark"/></svg></button>
                    <button aria-label="Render view animation" class="flex-1 grid place-items-center"><svg class="size-[22px]"><use href="#clapper"/></svg></button>
                </div>
            </nav>

            <!-- Timeline -->
            <section class="relative h-[62px] shrink-0 border-t-2 border-[#161616] bg-[#444]" aria-label="Timeline">
                <svg id="ticks" class="w-full h-full"></svg>
                <svg class="absolute right-0 top-0 size-4"><use href="#corner"/></svg>
            </section>
            <div id="ruler" class="relative h-[21px] shrink-0 overflow-hidden bg-[#727272]">
                <div class="h-[17px] ml-[5px] -mr-3 mt-px rounded-full border border-[#555] bg-linear-to-b from-[#999] to-[#7c7c7c] flex items-center"><span class="size-[11px] rounded-full bg-[#6a6a6a] border border-[#444]"></span></div>
            </div>
            <nav class="relative h-[34px] shrink-0 bg-linear-to-b from-[#717171] to-[#666] border-t border-[#808080] flex items-center pl-[11px]">
                <svg class="absolute left-0 bottom-0 size-4"><use href="#corner"/></svg>
                <button aria-label="Editor type" class="h-[25px] w-[37px] rounded-[5px] border border-[#262626] bg-linear-to-b from-[#575757] to-[#363636] flex items-center justify-center gap-[2px]"><svg class="size-5"><use href="#clock"/></svg><svg class="w-2 h-[18px]"><use href="#updown"/></svg></button>
                <div class="ml-4 w-[247px] flex justify-between"><button>View</button><button>Marker</button><button>Frame</button><button>Playback</button></div>
                <div class="ml-[15px] h-[25px] w-[50px] flex rounded-[5px] border border-[#444] divide-x divide-[#333] overflow-hidden bg-linear-to-b from-[#a8a8a8] to-[#8e8e8e]">
                    <button aria-label="Use preview range" class="flex-1 grid place-items-center"><svg class="size-5"><use href="#preview"/></svg></button>
                    <button aria-label="Lock time cursor" class="flex-1 grid place-items-center"><svg class="size-5"><use href="#lock"/></svg></button>
                </div>
                <div class="ml-[7px] h-[25px] w-[284px] flex rounded-full border border-[#444] divide-x divide-[#333] overflow-hidden bg-linear-to-b from-[#999] to-[#b4b4b4]">
                    <label class="w-[145px] flex items-center px-[7px] gap-[6px]"><svg class="w-[6px] h-2"><use href="#left"/></svg>Start:<input value="1" class="flex-1 w-0 text-right pr-1"><svg class="w-[6px] h-2"><use href="#right"/></svg></label>
                    <label class="flex-1 flex items-center px-[7px] gap-[6px]"><svg class="w-[6px] h-2"><use href="#left"/></svg>End:<input value="250" class="flex-1 w-0 text-right pr-1"><svg class="w-[6px] h-2"><use href="#right"/></svg></label>
                </div>
                <label class="ml-2 h-[25px] w-[110px] flex items-center px-[7px] gap-[6px] rounded-full border border-[#444] bg-linear-to-b from-[#999] to-[#b4b4b4]"><svg class="w-[6px] h-2"><use href="#left"/></svg><input aria-label="Current frame" value="1" class="flex-1 w-0 text-right pr-1"><svg class="w-[6px] h-2"><use href="#right"/></svg></label>
                <div class="ml-[21px] h-[25px] w-[150px] flex rounded-[5px] border border-[#444] divide-x divide-[#333] overflow-hidden bg-linear-to-b from-[#a8a8a8] to-[#8e8e8e] [&_button]:flex-1 [&_button]:grid [&_button]:place-items-center">
                    <button aria-label="Jump to start"><svg class="size-5"><use href="#tostart"/></svg></button>
                    <button aria-label="Previous keyframe"><svg class="size-5"><use href="#rewind"/></svg></button>
                    <button aria-label="Play reverse"><svg class="size-[22px] rotate-180"><use href="#play"/></svg></button>
                    <button aria-label="Play"><svg class="size-[22px]"><use href="#play"/></svg></button>
                    <button aria-label="Next keyframe"><svg class="size-5 rotate-180"><use href="#rewind"/></svg></button>
                    <button aria-label="Jump to end"><svg class="size-5 rotate-180"><use href="#tostart"/></svg></button>
                </div>
                <label class="relative ml-[7px] w-[143px]"><select aria-label="Sync" class="pl-[9px]"><option>No Sync</option></select><svg class="absolute right-1 top-[3px] w-2 h-[18px]"><use href="#updown"/></svg></label>
                <button aria-label="Auto keyframe" class="ml-[21px] size-[25px] rounded-[5px] border border-[#444] bg-[#9a9a9a] grid place-items-center"><svg class="size-[22px]"><use href="#rec"/></svg></button>
                <button aria-label="Keyframe type" class="ml-[6px] h-[25px] w-[44px] rounded-[5px] border border-[#262626] bg-linear-to-b from-[#575757] to-[#363636] flex items-center justify-center gap-[7px]"><svg class="size-5"><use href="#keyframe"/></svg><svg class="w-2 h-[18px]"><use href="#updown"/></svg></button>
                <div class="ml-[7px] h-[25px] w-[213px] flex rounded-[5px] border border-[#444] divide-x divide-[#333] overflow-hidden bg-linear-to-b from-[#a8a8a8] to-[#8e8e8e]">
                    <label class="flex-1 flex items-center pl-[3px] bg-linear-to-b from-[#999] to-[#b2b2b2]"><svg class="size-[22px]"><use href="#keys"/></svg><input aria-label="Keying set" class="flex-1 w-0"></label>
                    <button aria-label="Insert keyframe" class="w-[25px] grid place-items-center"><svg class="size-[22px]"><use href="#key"/></svg></button>
                    <button aria-label="Delete keyframe" class="relative w-[25px] grid place-items-center"><svg class="size-[22px]"><use href="#key"/></svg><svg class="absolute inset-[3px] size-[18px]" viewBox="0 0 18 18"><path d="M1 1l16 15" stroke="#e04a4a" stroke-width="2"/></svg></button>
                </div>
            </nav>
        </div>

        <!-- Outliner and properties -->
        <aside class="w-[314px] shrink-0 bg-[#727272] flex flex-col overflow-hidden">
            <nav class="relative h-[33px] shrink-0 bg-linear-to-b from-[#727272] to-[#666] border-b border-[#808080] flex items-center pl-3">
                <button aria-label="Editor type" class="h-[25px] w-[37px] rounded-[5px] border border-[#262626] bg-linear-to-b from-[#575757] to-[#363636] flex items-center justify-center gap-[2px]"><svg class="size-[21px]"><use href="#outliner"/></svg><svg class="w-2 h-[18px]"><use href="#updown"/></svg></button>
                <button class="ml-[15px]">View</button>
                <button class="ml-[26px]">Search</button>
                <label class="ml-4 flex-1"><select aria-label="Display mode" class="pl-[9px] rounded-r-none!"><option>All Scenes</option></select></label>
                <svg class="absolute right-0 top-0 size-4"><use href="#corner"/></svg>
            </nav>

            <div class="relative pt-px h-[157px] shrink-0 [&_li]:h-[25px] [&_li]:flex [&_li]:items-center">
                <div class="absolute left-[33px] top-6 w-px h-[116px] bg-[#333]"></div>
                <div class="absolute right-0 top-0 h-[154px] w-[74px] flex [&_i]:w-[25px] [&_i]:border-l [&_i]:border-[#606060]"><i></i><i></i><i></i></div>
                <ul class="relative">
                    <li class="bg-[#7e868b] mr-[74px] pl-[2px]"><svg class="size-4"><use href="#collapse"/></svg><span class="w-[6px] h-px bg-[#333]"></span><svg class="size-6 rounded-full bg-white/30 p-px"><use href="#scene"/></svg><span class="ml-[3px]">Scene</span></li>
                    <li class="bg-white/5 pl-8"><svg class="size-4"><use href="#expand"/></svg><svg class="size-6 ml-px"><use href="#layers"/></svg><span class="ml-[3px]">RenderLayers</span><span class="ml-3 w-px h-[15px] bg-[#333]"></span><svg class="ml-[10px] size-6 rounded-full bg-white/30 p-px"><use href="#layers"/></svg></li>
                    <li class="pl-[49px]"><svg class="size-6 rounded-full bg-white/30 p-px"><use href="#world"/></svg><span class="ml-[3px]">World</span></li>
                    <li class="bg-white/5 pl-[26px]"><svg class="size-4"><use href="#expand"/></svg><span class="w-[7px] h-px bg-[#333]"></span><svg class="size-6 fill-[#ea9440] stroke-[#6a3a08]"><use href="#moviecam"/></svg><span class="ml-[3px] w-[162px] flex items-center">Camera<span class="ml-3 w-px h-[15px] bg-[#333]"></span><svg class="ml-[10px] size-6 rounded-full bg-white/30 fill-[#aaa] stroke-[#666] p-[2px]"><use href="#moviecam"/></svg></span>
                        <svg class="ml-[3px] size-6"><use href="#eye"/></svg><svg class="ml-px size-6"><use href="#cursor"/></svg><svg class="size-6"><use href="#still"/></svg></li>
                    <li class="pl-[26px]"><svg class="size-4"><use href="#expand"/></svg><span class="w-[7px] h-px bg-[#333]"></span><svg class="size-6"><use href="#cubemesh"/></svg><span class="ml-[3px] w-[162px] flex items-center text-white">Cube<span class="ml-3 w-px h-[15px] bg-[#333]"></span><svg class="ml-[10px] size-6"><use href="#mesh"/></svg></span>
                        <svg class="ml-[3px] size-6"><use href="#eye"/></svg><svg class="ml-px size-6"><use href="#cursor"/></svg><svg class="size-6"><use href="#still"/></svg></li>
                    <li class="bg-white/5 pl-[26px]"><svg class="size-4"><use href="#expand"/></svg><span class="w-[7px] h-px bg-[#333]"></span><svg class="size-6"><use href="#lamp"/></svg><span class="ml-[3px] w-[162px] flex items-center">Lamp<span class="ml-3 w-px h-[15px] bg-[#333]"></span><svg class="ml-[10px] size-6"><use href="#lampdata"/></svg></span>
                        <svg class="ml-[3px] size-6"><use href="#eye"/></svg><svg class="ml-px size-6"><use href="#cursor"/></svg><svg class="size-6"><use href="#still"/></svg></li>
                </ul>
            </div>
            <div class="relative h-[22px] shrink-0 px-[6px]">
                <div class="h-4 rounded-full bg-[#575757]"><div class="h-4 w-[253px] rounded-full border border-[#505050] bg-linear-to-b from-[#969696] to-[#808080]"></div></div>
                <svg class="absolute left-0 bottom-0 size-4"><use href="#corner"/></svg>
            </div>

            <nav class="relative h-[34px] shrink-0 bg-linear-to-b from-[#727272] to-[#666] border-t border-t-black border-b border-b-[#808080] flex items-center pl-3">
                <button aria-label="Editor type" class="h-[25px] w-[37px] rounded-[5px] border border-[#262626] bg-linear-to-b from-[#575757] to-[#363636] flex items-center justify-center gap-[2px]"><svg class="size-5"><use href="#props"/></svg><svg class="w-2 h-[18px]"><use href="#updown"/></svg></button>
                <div class="ml-[10px] flex-1 h-[25px] flex overflow-hidden rounded-l-[5px] border border-r-0 border-[#262626] bg-linear-to-b from-[#575757] to-[#363636] divide-x divide-[#222] [&_button]:w-[25px] [&_button]:shrink-0 [&_button]:grid [&_button]:place-items-center">
                    <button aria-label="Render" class="bg-[#5680c2]"><svg class="size-[22px]"><use href="#still"/></svg></button>
                    <button aria-label="Render layers"><svg class="size-5 opacity-70"><use href="#layers"/></svg></button>
                    <button aria-label="Scene"><svg class="size-5 opacity-70"><use href="#scene"/></svg></button>
                    <button aria-label="World"><svg class="size-5 opacity-80"><use href="#world"/></svg></button>
                    <button aria-label="Object"><svg class="size-5 opacity-80"><use href="#object"/></svg></button>
                    <button aria-label="Constraints"><svg class="size-5"><use href="#chain"/></svg></button>
                    <button aria-label="Modifiers"><svg class="size-5"><use href="#wrench"/></svg></button>
                    <button aria-label="Data"><svg class="size-[22px]"><use href="#mesh"/></svg></button>
                    <button aria-label="Material"><svg class="size-[22px] opacity-80"><use href="#material"/></svg></button>
                    <button aria-label="Texture"><svg class="size-[22px] opacity-80"><use href="#texture"/></svg></button>
                    <button aria-label="Particles"></button>
                </div>
                <svg class="absolute right-0 top-0 size-4"><use href="#corner"/></svg>
            </nav>
            <div class="h-11 shrink-0 flex items-center pl-3"><svg class="size-[22px]"><use href="#pin"/></svg><svg class="ml-[6px] size-[22px]"><use href="#scene"/></svg><span class="ml-[3px]">Scene</span></div>

            <div class="px-[6px] [&_h2]:flex [&_h2]:items-center [&_h2]:h-[30px] [&_h2]:border-t [&_h2]:border-[#454545] [&_h2]:pl-[10px] [&_h2]:pr-[6px] [&_h2]:gap-[5px] [&_h2]:text-[15px] [&_h2]:text-[#0c0c0c] [&_input[type=checkbox]]:appearance-none [&_input[type=checkbox]]:size-[17px] [&_input[type=checkbox]]:rounded-[4px] [&_input[type=checkbox]]:border [&_input[type=checkbox]]:border-[#2c2c2c] [&_input[type=checkbox]]:bg-linear-to-b [&_input[type=checkbox]]:from-[#4a4a4a] [&_input[type=checkbox]]:to-[#585858]">
                <section>
                    <h2><svg class="size-[11px]"><use href="#open"/></svg><span class="flex-1">Render</span><svg class="w-[14px] h-2"><use href="#grip"/></svg></h2>
                    <div class="pt-[11px] px-1 pb-[9px]">
                        <div class="h-[25px] flex rounded-[6px] border border-[#333] divide-x divide-[#333] overflow-hidden bg-linear-to-b from-[#a6a6a6] to-[#8e8e8e] [&_button]:flex-1 [&_button]:flex [&_button]:items-center [&_button]:pl-[2px]">
                            <button class="relative"><svg class="size-[22px]"><use href="#still"/></svg><svg class="absolute left-4 top-[1px] size-[10px]"><use href="#spark"/></svg><span class="flex-1">Render</span></button>
                            <button><svg class="size-5"><use href="#clapper"/></svg><span class="flex-1">Animation</span></button>
                            <button><svg class="size-[22px]"><use href="#speaker"/></svg><span class="flex-1">Audio</span></button>
                        </div>
                        <div class="mt-[6px] flex items-center pl-[9px]">
                            <label for="display" class="w-[95px]">Display:</label>
                            <div class="relative flex-1"><select id="display" class="pl-[9px] rounded-r-none!"><option>Image Editor</option></select><svg class="absolute right-1 top-[3px] w-2 h-[18px]"><use href="#updown"/></svg></div>
                            <button aria-label="Lock interface" class="size-[25px] rounded-r-[5px] border border-l-0 border-[#333] bg-[#9a9a9a] grid place-items-center"><svg class="size-5"><use href="#unlock"/></svg></button>
                        </div>
                    </div>
                </section>
                <section>
                    <h2><svg class="size-[11px]"><use href="#open"/></svg><span class="flex-1">Dimensions</span><svg class="w-[14px] h-2"><use href="#grip"/></svg></h2>
                    <div class="pt-[11px] px-1 pb-[9px]">
                        <div class="flex">
                            <label class="relative flex-1"><select aria-label="Render Presets" class="pl-[9px] rounded-r-none!"><option>Render Presets</option></select><svg class="absolute right-1 top-[3px] w-2 h-[18px]"><use href="#updown"/></svg></label>
                            <button aria-label="Add preset" class="size-[25px] border-y border-[#333] bg-[#9a9a9a] grid place-items-center"><svg class="size-5"><use href="#plus"/></svg></button>
                            <button aria-label="Remove preset" class="size-[25px] rounded-r-[5px] border border-[#333] bg-[#9a9a9a] grid place-items-center"><svg class="size-5"><use href="#minus"/></svg></button>
                        </div>
                        <div class="mt-[11px] grid grid-cols-2 gap-x-[10px] [&_p]:pl-[9px] [&_fieldset]:border [&_fieldset]:border-[#3a3a3a] [&_fieldset]:overflow-hidden [&_fieldset]:divide-[#333] [&_fieldset_label]:flex [&_fieldset_label]:items-center [&_fieldset_label]:flex-1 [&_fieldset_label]:px-[6px] [&_fieldset_label]:gap-[6px] [&_fieldset_label]:whitespace-nowrap [&_fieldset_label]:bg-linear-to-b [&_fieldset_label]:from-[#a0a0a0] [&_fieldset_label]:to-[#b2b2b2]">
                            <div>
                                <p class="h-5">Resolution:</p>
                                <fieldset class="h-[75px] flex flex-col divide-y rounded-[12px]">
                                    <label><svg class="w-[6px] h-2"><use href="#left"/></svg>X:<input value="1920 px" class="flex-1 w-0 text-right pr-[3px]"><svg class="w-[6px] h-2"><use href="#right"/></svg></label>
                                    <label><svg class="w-[6px] h-2"><use href="#left"/></svg>Y:<input value="1080 px" class="flex-1 w-0 text-right pr-[3px]"><svg class="w-[6px] h-2"><use href="#right"/></svg></label>
                                    <label class="relative"><span class="absolute inset-y-0 left-0 bg-[#6e6e6e]" style="width:52%"></span><input aria-label="Resolution percentage" value="50%" class="relative flex-1 w-0 text-right pr-[13px]"></label>
                                </fieldset>
                                <p class="h-[25px] leading-[25px]">Aspect Ratio:</p>
                                <fieldset class="h-[50px] flex flex-col divide-y rounded-[12px]">
                                    <label><svg class="w-[6px] h-2"><use href="#left"/></svg>X:<input value="1.000" class="flex-1 w-0 text-right pr-[3px]"><svg class="w-[6px] h-2"><use href="#right"/></svg></label>
                                    <label><svg class="w-[6px] h-2"><use href="#left"/></svg>Y:<input value="1.000" class="flex-1 w-0 text-right pr-[3px]"><svg class="w-[6px] h-2"><use href="#right"/></svg></label>
                                </fieldset>
                                <div class="mt-[3px] h-[25px] flex items-center pl-1">
                                    <label class="w-[76px] flex items-center gap-[11px]"><input type="checkbox">Bord</label>
                                    <label class="flex items-center gap-[11px] opacity-40"><input type="checkbox" disabled>Crop</label>
                                </div>
                            </div>
                            <div>
                                <p class="h-5">Frame Range:</p>
                                <fieldset class="h-[75px] flex flex-col divide-y rounded-[12px]">
                                    <label><svg class="w-[6px] h-2"><use href="#left"/></svg>Start Frame:<input value="1" class="flex-1 w-0 text-right pr-[3px]"><svg class="w-[6px] h-2"><use href="#right"/></svg></label>
                                    <label><svg class="w-[6px] h-2"><use href="#left"/></svg><span class="-mr-[6px]">End Frame:</span><input value="250" class="flex-1 w-0 text-right pr-[3px]"><svg class="w-[6px] h-2"><use href="#right"/></svg></label>
                                    <label><svg class="w-[6px] h-2"><use href="#left"/></svg>Frame Step:<input value="1" class="flex-1 w-0 text-right pr-[3px]"><svg class="w-[6px] h-2"><use href="#right"/></svg></label>
                                </fieldset>
                                <p class="h-[25px] leading-[25px]">Frame Rate:</p>
                                <label class="relative block"><select aria-label="Frame rate" class="pl-[9px]"><option>24 fps</option></select><svg class="absolute right-1 top-[3px] w-2 h-[18px]"><use href="#updown"/></svg></label>
                                <p class="h-[25px] leading-[25px]">Time Remapping:</p>
                                <fieldset class="h-[25px] flex divide-x rounded-full">
                                    <label><svg class="w-[6px] h-2"><use href="#left"/></svg><input aria-label="Old" value=":100" class="flex-1 w-0 text-right"><svg class="w-[6px] h-2"><use href="#right"/></svg></label>
                                    <label><svg class="w-[6px] h-2"><use href="#left"/></svg><input aria-label="New" value=":100" class="flex-1 w-0 text-right"><svg class="w-[6px] h-2"><use href="#right"/></svg></label>
                                </fieldset>
                            </div>
                        </div>
                    </div>
                </section>
                <section>
                    <h2><svg class="size-[11px]"><use href="#open"/></svg><label class="relative flex-1 flex items-center gap-2"><input type="checkbox" checked>Anti-Aliasing<svg class="absolute left-1 -top-px size-4" viewBox="0 0 16 16"><path d="M1 7l4 4 8-10" fill="none" stroke="#ddd" stroke-width="2.500"/></svg></label><svg class="w-[14px] h-2"><use href="#grip"/></svg></h2>
                    <div class="pt-[11px] px-1 pb-[9px] grid grid-cols-2 gap-x-[10px] gap-y-[3px]">
                        <div class="h-[25px] flex rounded-[5px] border border-[#262626] overflow-hidden bg-linear-to-b from-[#575757] to-[#363636] text-[#eee] divide-x divide-[#222] [&_button]:flex-1">
                            <button>5</button><button class="bg-[#5680c2] text-black">8</button><button>11</button><button>16</button>
                        </div>
                        <label class="relative"><select aria-label="Filter" class="pl-[9px]"><option>Mitchell-Netravali</option></select><svg class="absolute right-1 top-[3px] w-2 h-[18px]"><use href="#updown"/></svg></label>
                        <label class="flex items-center gap-[11px] pl-1"><input type="checkbox">Full Sample</label>
                        <label class="h-[25px] flex items-center px-[7px] gap-[6px] rounded-full border border-[#3a3a3a] bg-linear-to-b from-[#a0a0a0] to-[#b2b2b2]"><svg class="w-[6px] h-2"><use href="#left"/></svg>Size:<input value="1.000 px" class="flex-1 w-0 text-right pr-[3px]"><svg class="w-[6px] h-2"><use href="#right"/></svg></label>
                    </div>
                </section>
                <h2><svg class="size-[11px]"><use href="#closed"/></svg><label class="flex-1 flex items-center gap-2"><input type="checkbox">Sampled Motion Blur</label><svg class="w-[14px] h-2"><use href="#grip"/></svg></h2>
                <h2><svg class="size-[11px]"><use href="#closed"/></svg><span class="flex-1">Shading</span><svg class="w-[14px] h-2"><use href="#grip"/></svg></h2>
                <h2><svg class="size-[11px]"><use href="#closed"/></svg><span class="flex-1">Performance</span><svg class="w-[14px] h-2"><use href="#grip"/></svg></h2>
                <h2><svg class="size-[11px]"><use href="#closed"/></svg><span class="flex-1">Post Processing</span><svg class="w-[14px] h-2"><use href="#grip"/></svg></h2>
                <h2><svg class="size-[11px]"><use href="#closed"/></svg><span class="flex-1">Metadata</span><svg class="w-[14px] h-2"><use href="#grip"/></svg></h2>
                <section>
                    <h2><svg class="size-[11px]"><use href="#open"/></svg><span class="flex-1">Output</span><svg class="w-[14px] h-2"><use href="#grip"/></svg></h2>
                    <div class="pt-[10px] px-1 pb-[11px]">
                        <div class="h-[25px] flex rounded-[6px] border border-[#333] divide-x divide-[#333] overflow-hidden bg-[#9a9a9a]">
                            <input aria-label="Output path" value="/tmp\" class="flex-1 pl-2 bg-linear-to-b from-[#999] to-[#b2b2b2]">
                            <button aria-label="Browse" class="w-[25px] grid place-items-center"><svg class="size-[22px]"><use href="#folder"/></svg></button>
                        </div>
                        <div class="mt-[6px] mb-[3px] grid grid-cols-2 gap-x-[10px] [&_label]:relative [&_label]:h-7 [&_label]:flex [&_label]:items-center [&_label]:gap-[11px] [&_label]:pl-1">
                            <label class="text-white"><input type="checkbox" checked>Overwrite<svg class="absolute left-2 top-[4px] size-4" viewBox="0 0 16 16"><path d="M1 7l4 4 8-10" fill="none" stroke="#ddd" stroke-width="2.500"/></svg></label>
                            <label class="text-white"><input type="checkbox" checked>File Extensions<svg class="absolute left-2 top-[4px] size-4" viewBox="0 0 16 16"><path d="M1 7l4 4 8-10" fill="none" stroke="#ddd" stroke-width="2.500"/></svg></label>
                            <label><input type="checkbox">Placeholders</label>
                            <label><input type="checkbox">Cache Result</label>
                        </div>
                        <div class="grid grid-cols-2 gap-x-[10px]">
                            <label class="relative"><select aria-label="File format" class="pl-7"><option>PNG</option></select><svg class="absolute left-1 top-[2px] size-[21px]"><use href="#image"/></svg><svg class="absolute right-1 top-[3px] w-2 h-[18px]"><use href="#updown"/></svg></label>
                            <div class="h-[25px] flex rounded-[5px] border border-[#262626] overflow-hidden bg-linear-to-b from-[#575757] to-[#363636] text-[#eee] divide-x divide-[#222] [&_button]:flex-1">
                                <button>BW</button><button>RGB</button><button class="bg-[#5680c2] text-black">RGBA</button>
                            </div>
                        </div>
                        <div class="mt-[3px] flex items-center pl-[9px]">
                            <span class="w-[96px]">Color Depth:</span>
                            <div class="flex-1 h-[25px] flex rounded-[5px] border border-[#262626] overflow-hidden bg-linear-to-b from-[#575757] to-[#363636] text-[#eee] divide-x divide-[#222] [&_button]:flex-1">
                                <button class="bg-[#5680c2] text-black">8</button><button>16</button>
                            </div>
                        </div>
                        <label class="relative mt-[3px] h-[25px] flex items-center px-[17px] rounded-full border border-[#3a3a3a] overflow-hidden bg-linear-to-b from-[#a0a0a0] to-[#b2b2b2]"><span class="absolute inset-y-0 left-0 bg-[#737373]" style="width:18%"></span><span class="relative">Compression:</span><input value="15%" class="relative flex-1 w-0 text-right"></label>
                    </div>
                </section>
                <h2><svg class="size-[11px]"><use href="#closed"/></svg><span class="flex-1">Bake</span><svg class="w-[14px] h-2"><use href="#grip"/></svg></h2>
                <h2><svg class="size-[11px]"><use href="#closed"/></svg><label class="flex-1 flex items-center gap-2"><input type="checkbox">Freestyle</label><svg class="w-[14px] h-2"><use href="#grip"/></svg></h2>
            </div>
        </aside>
    </main>

    <script>
        const SVG_NS = 'http://www.w3.org/2000/svg';

        function addShape(parent, name, attrs) {
            const el = document.createElementNS(SVG_NS, name);
            for (const key in attrs) el.setAttribute(key, attrs[key]);
            parent.appendChild(el);
        }

        // Project a point of the floor plane (-1..1) to the view
        function project(x, y) {
            const w = 1 - 0.4558 * x + 0.175 * y;
            return [
                (1135.2 - 317.1 * x + 703.1 * y) / w,
                (607.1 - 65.9 * x + 14.1 * y) / w
            ];
        }

        // Floor grid
        const floor = document.getElementById('floor');
        for (let i = -8; i <= 8; i++) {
            if (i === 0) continue;
            const k = i / 8;
            [[[k, -1], [k, 1]], [[-1, k], [1, k]]].forEach(([from, to]) => {
                const [x1, y1] = project(...from);
                const [x2, y2] = project(...to);
                addShape(floor, 'line', { x1, y1, x2, y2 });
            });
        }

        // Timeline
        const FRAME_ZERO = 351;
        const FRAME_WIDTH = 6.044;
        const frameX = (frame) => FRAME_ZERO + frame * FRAME_WIDTH;

        const ticks = document.getElementById('ticks');
        addShape(ticks, 'rect', { x: frameX(0), y: 0, width: 250 * FRAME_WIDTH, height: 60, fill: '#727272' });
        for (let f = -55; f <= 280; f += 5) {
            const inside = f >= 0 && f <= 250;
            const major = f % 10 === 0;
            const stroke = inside ? (major ? '#5c5c5c' : '#696969') : (major ? '#333' : '#3d3d3d');
            addShape(ticks, 'line', { x1: frameX(f), x2: frameX(f), y1: 0, y2: 60, stroke, 'stroke-width': 1.5 });
        }
        addShape(ticks, 'rect', { x: frameX(1) - 1, y: 0, width: 4, height: 60, fill: '#60c040' });

        const ruler = document.getElementById('ruler');
        for (let f = -50; f <= 280; f += 10) {
            const label = document.createElement('span');
            label.className = 'absolute top-px -translate-x-1/2 leading-[18px]';
            label.style.left = (353 + f * 6.018 - (f < 0 ? 3 : 0)) + 'px';
            label.textContent = f;
            ruler.appendChild(label);
        }
    </script>
</body>
</html>
